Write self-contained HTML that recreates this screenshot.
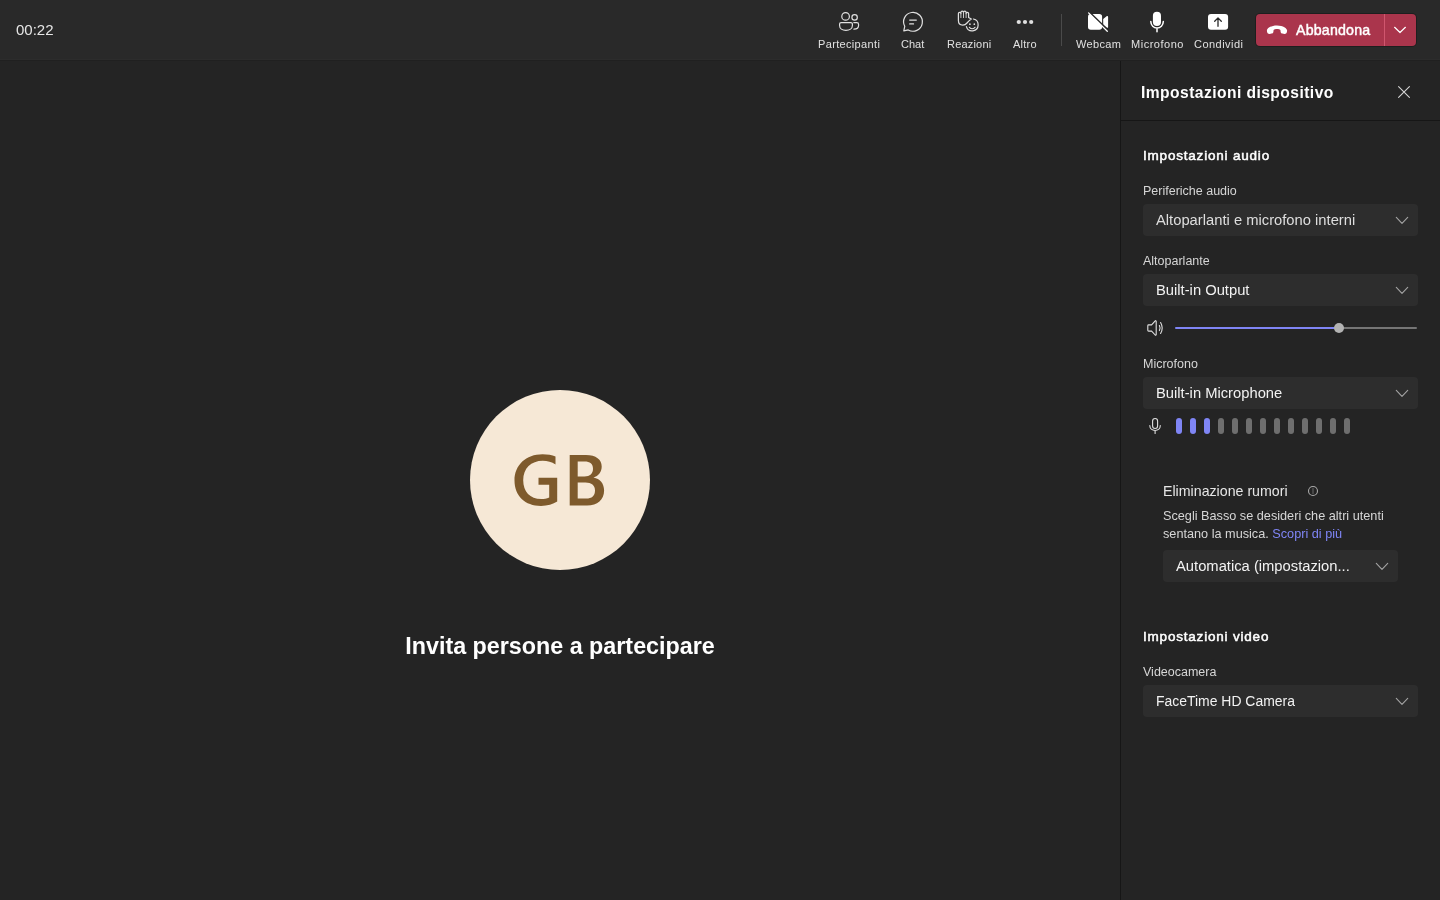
<!DOCTYPE html>
<html><head><meta charset="utf-8">
<style>
*{box-sizing:border-box;margin:0;padding:0}
html,body{width:1440px;height:900px;overflow:hidden;background:#242424;-webkit-font-smoothing:antialiased;font-family:"Liberation Sans",sans-serif;color:#fff}
#top{position:absolute;left:0;top:0;width:1440px;height:60px;background:#292929}
#timer{position:absolute;will-change:transform;left:16px;top:20px;font-size:15px;line-height:20px;color:#e6e6e6}
.lbl{position:absolute;top:37px;will-change:transform;line-height:14px;white-space:nowrap;color:#e0e0e0;font-size:11px}
#divider{position:absolute;left:1061px;top:14px;width:1px;height:32px;background:#4a4a4a}
#leave{position:absolute;left:1256px;top:14px;width:160px;height:32px;border-radius:4px;background:#aa354c;box-shadow:0 0 0 1px rgba(0,0,0,.25)}
#leave .sep{position:absolute;left:128px;top:0;width:1px;height:32px;background:#d0566e}
#leave .t{position:absolute;will-change:transform;left:39.5px;top:-0.5px;line-height:32px;font-size:14.2px;font-weight:normal;-webkit-text-stroke:0.45px #fff;letter-spacing:0.2px;color:#fff}
#avatar{position:absolute;left:470px;top:390px;width:180px;height:180px;border-radius:50%;background:#f6e8d6}
#invite{position:absolute;will-change:transform;left:0;width:1120px;top:630px;text-align:center;font-size:23.3px;font-weight:bold;line-height:32px;color:#fff}
#panel{position:absolute;left:1120px;top:60px;width:320px;height:840px;background:#242424;border-left:1px solid #161616}
#phead{position:absolute;left:0;top:0;width:319px;height:61px;border-bottom:1px solid #161616}
.txt{position:absolute;will-change:transform;white-space:nowrap;line-height:16px}
.h{font-weight:normal;-webkit-text-stroke:0.5px #fff;font-size:13.5px;letter-spacing:0.8px;color:#fff;margin-left:-1px}
.lab{font-size:12.5px;color:#d6d6d6;margin-left:-0.8px}
.dd{position:absolute;left:22px;width:275px;height:32px;background:#2d2d2d;border-radius:4px}
.dd .v{position:absolute;will-change:transform;left:13px;top:0;line-height:32px;font-size:14.75px;color:#f2f2f2;white-space:nowrap}
#ov{position:absolute;left:0;top:0}
</style></head><body>
<div id="top">
  <div id="timer">00:22</div>
  <div class="lbl" style="left:817.6px;font-size:11px;letter-spacing:0.34px">Partecipanti</div>
  <div class="lbl" style="left:901.2px;font-size:11px;letter-spacing:0px">Chat</div>
  <div class="lbl" style="left:947.4px;font-size:11px;letter-spacing:0.19px">Reazioni</div>
  <div class="lbl" style="left:1012.8px;font-size:11px;letter-spacing:0.25px">Altro</div>
  <div id="divider"></div>
  <div class="lbl" style="left:1075.6px;font-size:11px;letter-spacing:0.32px">Webcam</div>
  <div class="lbl" style="left:1131px;font-size:11px;letter-spacing:0.52px">Microfono</div>
  <div class="lbl" style="left:1193.8px;font-size:11px;letter-spacing:0.46px">Condividi</div>
  <div id="leave"><div class="t">Abbandona</div><div class="sep"></div></div>
</div>
<div id="avatar"></div>
<div id="invite">Invita persone a partecipare</div>
<div id="panel">
  <div id="phead"></div>
  <div class="txt" style="left:19.8px;top:25px;font-size:15.6px;font-weight:bold;letter-spacing:0.45px">Impostazioni dispositivo</div>
  <div class="txt h" style="left:23px;top:88px">Impostazioni audio</div>
  <div class="txt lab" style="left:23px;top:123px">Periferiche audio</div>
  <div class="dd" style="top:144px"><div class="v" style="color:#dedede">Altoparlanti e microfono interni</div></div>
  <div class="txt lab" style="left:23px;top:193px">Altoparlante</div>
  <div class="dd" style="top:214px"><div class="v">Built-in Output</div></div>
  <div class="txt lab" style="left:23px;top:296px">Microfono</div>
  <div class="dd" style="top:317px"><div class="v">Built-in Microphone</div></div>
  <div class="txt" style="left:41.8px;top:423px;font-size:14.2px;color:#e6e6e6">Eliminazione rumori</div>
  <div class="txt lab" style="left:43px;top:447px;line-height:18px;font-size:12.7px">Scegli Basso se desideri che altri utenti<br>sentano la musica. <span style="color:#7f85f5">Scopri di più</span></div>
  <div class="dd" style="left:42px;width:235px;top:490px"><div class="v">Automatica (impostazion...</div></div>
  <div class="txt h" style="left:23px;top:569px">Impostazioni video</div>
  <div class="txt lab" style="left:23px;top:604px">Videocamera</div>
  <div class="dd" style="top:625px"><div class="v" style="font-size:13.95px">FaceTime HD Camera</div></div>
</div>
<div style="position:absolute;left:0;top:59px;width:1440px;height:1px;background:#2c2c2c"></div>
<div style="position:absolute;left:0;top:60px;width:1440px;height:1px;background:#202020"></div>
<svg id="ov" width="1440" height="900" viewBox="0 0 1440 900" fill="none" stroke-linecap="round" stroke-linejoin="round">
  <!-- Partecipanti -->
  <g stroke="#e0e0e0" stroke-width="1.2">
    <circle cx="845.6" cy="16.4" r="3.8"/>
    <circle cx="854.6" cy="17.4" r="2.7"/>
    <path d="M841.1 22.6H850.9a1.5 1.5 0 0 1 1.5 1.5V25.5C852.4 28.5 849.5 30.4 845.9 30.4C842.3 30.4 839.6 28.5 839.6 25.5V24.1a1.5 1.5 0 0 1 1.5-1.5Z"/>
    <path d="M853.8 22.6H856.8a1.8 1.8 0 0 1 1.8 1.8V25.3C858.6 27.8 856.5 29.2 853.9 29.2"/>
  </g>
  <!-- Chat -->
  <g stroke="#e0e0e0" stroke-width="1.2">
    <path d="M904.73 26.28L903.8 30.9L908.23 29.9A9.4 9.4 0 1 0 904.73 26.28Z"/>
    <path d="M909.7 20.1H916.3M909.7 23.9H913.5" stroke-width="1.3"/>
  </g>
  <!-- Reazioni -->
  <g stroke="#e0e0e0" stroke-width="1.2">
    <path d="M958.4 19.5V13.6A1.25 1.25 0 0 1 960.9 13.6V12.5A1.3 1.3 0 0 1 963.5 12.5A1.3 1.3 0 0 1 966.1 12.5V13.6A1.25 1.25 0 0 1 968.6 13.6V17.4L971.3 19.1C970 20 968.5 21.2 967 23C965.6 24.7 964.4 25.1 962.8 25.1C960.3 25.1 958.4 23.2 958.4 20.5Z"/>
    <path d="M960.9 13.6V17.6M963.5 12.5V17.6M966.1 13.6V17.6" stroke="#c8c8c8" stroke-width="1"/>
    <path d="M973.4 19A6 6 0 1 1 966.4 26.6"/>
    <path d="M969.4 27.3Q972.2 30.2 975 27.3"/>
  </g>
  <g fill="#e0e0e0"><circle cx="969.9" cy="24.2" r="0.85"/><circle cx="974.3" cy="24.2" r="0.85"/></g>
  <!-- Altro -->
  <g fill="#e0e0e0"><circle cx="1018.8" cy="22" r="2.1"/><circle cx="1025" cy="22" r="2.1"/><circle cx="1031.2" cy="22" r="2.1"/></g>
  <!-- Webcam off -->
  <g fill="#ffffff">
    <rect x="1088" y="13.9" width="14.1" height="15.9" rx="2.8"/>
    <path d="M1103.2 19L1106.6 16.2C1107.2 15.7 1108.1 16.1 1108.1 16.9V26.9C1108.1 27.7 1107.2 28.1 1106.6 27.6L1103.2 24.8Z"/>
  </g>
  <path d="M1089.5 12.1L1108.5 30.6" stroke="#292929" stroke-width="1.5"/>
  <path d="M1088.6 12.9L1107.3 31.3" stroke="#ffffff" stroke-width="1.3"/>
  <!-- Mic -->
  <rect x="1152.9" y="11.7" width="8.1" height="14.3" rx="4.05" fill="#ffffff"/>
  <path d="M1150.8 21.6C1150.8 25.3 1153.7 28.1 1157 28.1C1160.4 28.1 1163.3 25.3 1163.3 21.6M1157 28.1V31.8" stroke="#ffffff" stroke-width="1.5"/>
  <!-- Share -->
  <rect x="1208" y="14.1" width="20.1" height="15.7" rx="3" fill="#ffffff"/>
  <path d="M1218 18.2V26.3M1214.7 21.2L1218 17.9L1221.3 21.2" stroke="#292929" stroke-width="1.3"/>
  <!-- Hangup -->
  <path fill="#ffffff" d="M1266.9 30.8C1266.6 28.5 1270.5 25.4 1277 25.4C1283.5 25.4 1287.4 28.5 1287.1 30.8L1286.9 32C1286.7 33.2 1285.6 34 1284.4 33.9L1282.4 33.6C1281.4 33.5 1280.7 32.7 1280.6 31.7L1280.4 30C1279.6 29.2 1278.4 28.9 1277 28.9C1275.6 28.9 1274.4 29.2 1273.6 30L1273.4 31.7C1273.3 32.7 1272.6 33.5 1271.6 33.6L1269.6 33.9C1268.4 34 1267.3 33.2 1267.1 32Z"/>
  <path d="M1394.6 27.3L1400 32.5L1405.4 27.3" stroke="#ffffff" stroke-width="1.2"/>
  <!-- Close X -->
  <path d="M1398.6 86.6L1409.4 97.4M1409.4 86.6L1398.6 97.4" stroke="#d6d6d6" stroke-width="1.1"/>
  <!-- Dropdown chevrons -->
  <g stroke="#a3a3a3" stroke-width="1.1">
    <path d="M1396.3 217.3L1402 223.3L1407.7 217.3"/>
    <path d="M1396.3 287.3L1402 293.3L1407.7 287.3"/>
    <path d="M1396.3 390.3L1402 396.3L1407.7 390.3"/>
    <path d="M1376.3 563.3L1382 569.3L1387.7 563.3"/>
    <path d="M1396.3 698.3L1402 704.3L1407.7 698.3"/>
  </g>
  <!-- Speaker -->
  <g stroke="#e0e0e0" stroke-width="1.1">
    <path d="M1148.6 324.9H1151.6L1155.2 320.8C1155.5 320.5 1156.2 320.6 1156.2 321.2V334.6C1156.2 335.2 1155.5 335.3 1155.2 335L1151.6 331.1H1148.6C1148.1 331.1 1147.8 330.8 1147.8 330.3V325.7C1147.8 325.2 1148.1 324.9 1148.6 324.9Z"/>
    <path d="M1159.4 325.5Q1160.8 328 1159.4 330.6M1160.6 322.5Q1163.8 328 1160.6 333.5"/>
  </g>
  <!-- Slider -->
  <path d="M1176 328H1339" stroke="#7f85f5" stroke-width="2"/>
  <path d="M1339 328H1416" stroke="#757575" stroke-width="2"/>
  <circle cx="1339" cy="328" r="5" fill="#b3b3b3"/>
  <!-- small mic -->
  <g stroke="#e0e0e0" stroke-width="1.1">
    <rect x="1152.6" y="418.5" width="5" height="10" rx="2.5"/>
    <path d="M1149.8 425.6C1149.8 428.6 1152.2 430.5 1155.1 430.5C1158 430.5 1160.3 428.6 1160.3 425.6M1155.1 430.5V433.4"/>
  </g>
  <!-- level bars -->
  <g>
    <rect x="1176" y="418" width="6" height="16" rx="3" fill="#7f85f5"/>
    <rect x="1190" y="418" width="6" height="16" rx="3" fill="#7f85f5"/>
    <rect x="1204" y="418" width="6" height="16" rx="3" fill="#7f85f5"/>
    <rect x="1218" y="418" width="6" height="16" rx="3" fill="#6e6e6e"/>
    <rect x="1232" y="418" width="6" height="16" rx="3" fill="#6e6e6e"/>
    <rect x="1246" y="418" width="6" height="16" rx="3" fill="#6e6e6e"/>
    <rect x="1260" y="418" width="6" height="16" rx="3" fill="#6e6e6e"/>
    <rect x="1274" y="418" width="6" height="16" rx="3" fill="#6e6e6e"/>
    <rect x="1288" y="418" width="6" height="16" rx="3" fill="#6e6e6e"/>
    <rect x="1302" y="418" width="6" height="16" rx="3" fill="#6e6e6e"/>
    <rect x="1316" y="418" width="6" height="16" rx="3" fill="#6e6e6e"/>
    <rect x="1330" y="418" width="6" height="16" rx="3" fill="#6e6e6e"/>
    <rect x="1344" y="418" width="6" height="16" rx="3" fill="#6e6e6e"/>
  </g>
  <!-- info -->
  <circle cx="1313" cy="491" r="4.5" stroke="#a8a8a8" stroke-width="1.1"/>
  <path d="M1313 488.6V493.4" stroke="#5f5f5f" stroke-width="1.2"/>
  <!-- GB -->
  <g fill="#7e5a2c" fill-rule="evenodd">
    <path d="M555.5 456.5C552 455 547.5 454.2 542.5 454.2C526 454.2 514.5 465 514.5 480.5C514.5 496 525 505.9 541 505.9C547.5 505.9 553 504.3 557.2 501.6V477.8H538.5V484.7H549.2V497.5C546.8 498.6 544 499 541.2 499C530 499 523.2 491.5 523.2 480.2C523.2 468.5 531 460.8 542.8 460.8C547.5 460.8 551.8 462.2 555.5 464.4Z"/>
    <path d="M569.7 454.9H586C596 454.9 601.7 459.5 601.7 466.5C601.7 472 598.5 475.8 593.5 477.6C600 479 604.1 483.5 604.1 490.5C604.1 499.5 597.5 505.6 587 505.6H569.7ZM577.7 461.5V476.4H584.5C590 476.4 593 473.6 593 468.7C593 464 590 461.5 584.5 461.5ZM577.7 482.6V498.6H586C592 498.6 595 495.6 595 490.5C595 485.4 591.5 482.6 585.5 482.6Z"/>
  </g>
</svg>
</body></html>
